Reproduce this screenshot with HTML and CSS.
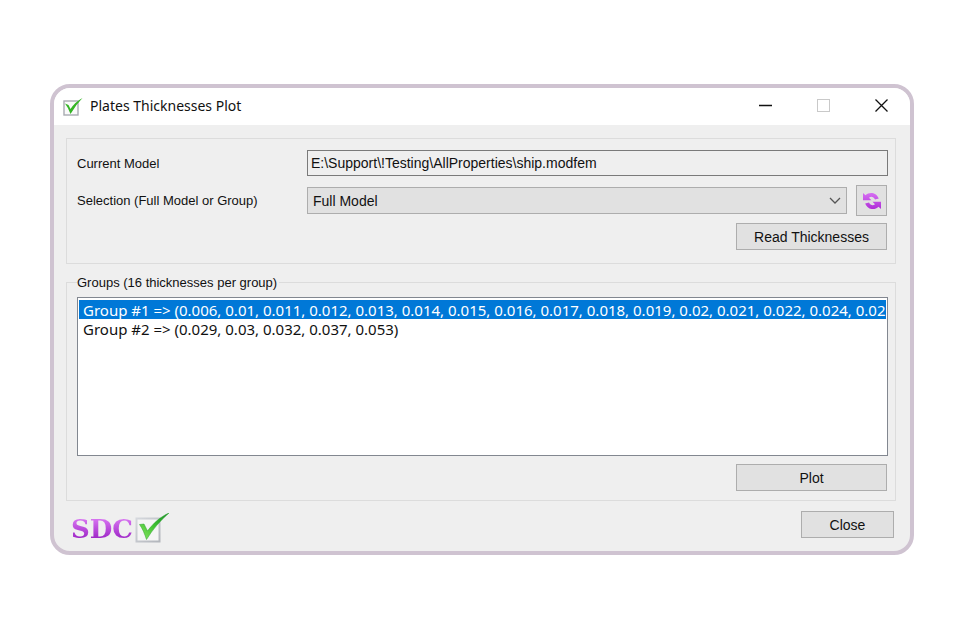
FILE: index.html
```html
<!DOCTYPE html>
<html lang="en">
<head>
    <meta charset="UTF-8">
    <meta name="viewport" content="width=device-width, initial-scale=1.0">
    <title>Plates Thicknesses Plot</title>
    <link rel="stylesheet" href="styles.css">
</head>
<body>
    <main class="window">
        <header class="title-bar">
            <svg class="title-icon" viewBox="0 0 20 18" aria-hidden="true">
                <rect x="1" y="3" width="14" height="14" fill="#fafafa" stroke="#a9abb2" stroke-width="1.4"/>
                <path d="M2 5.500L5.500 7L7.500 11Q12 4 19.500 0Q13 6.500 7.500 16Q5.500 10 2 5.500z" fill="#35b526"/>
            </svg>
            <h1>Plates Thicknesses Plot</h1>
            <div class="window-buttons">
                <button type="button" aria-label="Minimize">
                    <svg viewBox="0 0 14 14"><path d="M0 6.500H13" stroke="#111" stroke-width="1.300" fill="none"/></svg>
                </button>
                <button type="button" aria-label="Maximize" disabled>
                    <svg viewBox="0 0 14 14"><rect x="0.500" y="0.500" width="12" height="12" stroke="#c9c9c9" fill="none"/></svg>
                </button>
                <button type="button" aria-label="Close window">
                    <svg viewBox="0 0 14 14"><path d="M0.500 0.500L12.500 12.500M12.500 0.500L0.500 12.500" stroke="#111" stroke-width="1.300" fill="none"/></svg>
                </button>
            </div>
        </header>

        <div class="content">
            <section class="group model-group">
                <div class="row">
                    <label for="model">Current Model</label>
                    <input id="model" class="model-input" type="text" value="E:\Support\!Testing\AllProperties\ship.modfem" readonly>
                </div>
                <div class="row">
                    <label for="selection">Selection (Full Model or Group)</label>
                    <select id="selection" class="selection-select">
                        <option>Full Model</option>
                    </select>
                    <button type="button" class="btn refresh-btn" aria-label="Refresh">
                        <svg viewBox="0 0 18 18">
                            <defs>
                                <linearGradient id="refresh-fill" x1="0" y1="0" x2="0" y2="18" gradientUnits="userSpaceOnUse">
                                    <stop offset="0" stop-color="#d873f4"/>
                                    <stop offset="1" stop-color="#ad2bd6"/>
                                </linearGradient>
                            </defs>
                            <g fill="url(#refresh-fill)">
                                <path d="M0 1L2.500 3.200C6 -0.300 13 -0.300 15.800 6.500L12 7.500C10.500 4.500 8 4 6 5.800L8.500 8.300H0z"/>
                                <path d="M18 17L15.500 14.800C12 18.300 5 18.300 2.200 11.500L6 10.500C7.500 13.500 10 14 12 12.200L9.500 9.700H18z"/>
                            </g>
                        </svg>
                    </button>
                </div>
                <div class="actions">
                    <button type="button" class="btn wide-btn">Read Thicknesses</button>
                </div>
            </section>

            <fieldset class="group plot-group">
                <legend><label for="groups">Groups (16 thicknesses per group)</label></legend>
                <select id="groups" class="group-list" size="8">
                    <option selected>Group #1 =&gt; (0.006, 0.01, 0.011, 0.012, 0.013, 0.014, 0.015, 0.016, 0.017, 0.018, 0.019, 0.02, 0.021, 0.022, 0.024, 0.025)</option>
                    <option>Group #2 =&gt; (0.029, 0.03, 0.032, 0.037, 0.053)</option>
                </select>
                <div class="actions">
                    <button type="button" class="btn wide-btn">Plot</button>
                </div>
            </fieldset>

            <footer class="bottom-bar">
                <div class="logo">
                    <span class="logo-text">SDC</span>
                    <svg class="logo-check" viewBox="0 0 35 30" aria-hidden="true">
                        <defs>
                            <linearGradient id="box-line" x1="0" y1="0" x2="1" y2="1">
                                <stop offset="0" stop-color="#d5d8dd"/>
                                <stop offset="1" stop-color="#b3b6bc"/>
                            </linearGradient>
                            <linearGradient id="check-fill" x1="1" y1="0" x2="0" y2="1">
                                <stop offset="0" stop-color="#178a2a"/>
                                <stop offset="0.500" stop-color="#3fc32f"/>
                                <stop offset="1" stop-color="#8ee667"/>
                            </linearGradient>
                        </defs>
                        <rect x="1.500" y="5.500" width="23" height="23" fill="#f5f5f5" stroke="url(#box-line)" stroke-width="2"/>
                        <path d="M4.500 11.500L9 11L12.500 18C18.500 10 25 4 34 0C25 8 18 16 11.500 26.500C9.500 20.500 7.500 15.500 4.500 11.500z" fill="url(#check-fill)" stroke="#2aa32c" stroke-width="0.500"/>
                    </svg>
                </div>
                <button type="button" class="btn close-btn">Close</button>
            </footer>
        </div>
    </main>
</body>
</html>
```
FILE: styles.css
```css
* {
    box-sizing: border-box;
}

body {
    margin: 0;
    padding: 84px 50px;
    background-color: #fff;
    color: #111;
    font-family: "Liberation Sans", Arial, sans-serif;
    font-size: 14px;
}

button,
input,
select {
    font: inherit;
    color: inherit;
}

label {
    font-size: 13px;
}

.window {
    border: 4px solid #cfc3d1;
    border-radius: 20px;
    background-color: #efefef;
    overflow: hidden;
}

.title-bar {
    display: flex;
    align-items: center;
    height: 37px;
    padding: 0 6px 2px 9px;
    background-color: #fff;
}

.title-icon {
    width: 20px;
    height: 18px;
    margin-top: 2px;
}

h1 {
    flex: 1;
    margin: 0 0 0 7px;
    font-family: "Noto Sans", sans-serif;
    font-size: 14px;
    font-weight: normal;
    line-height: 20px;
}

.window-buttons {
    display: flex;
    gap: 14px;
}

.window-buttons button {
    display: flex;
    justify-content: center;
    width: 44px;
    padding: 8px 0;
    border: none;
    background: none;
}

.window-buttons svg {
    width: 14px;
    height: 14px;
}

.content {
    padding: 13px 14px 4px 12px;
}

.group {
    margin: 0;
    border: 1px solid #dcdcdc;
    padding: 0 7px 0 10px;
}

.model-group {
    padding-top: 11px;
    padding-bottom: 13px;
}

.row {
    display: flex;
    align-items: center;
    margin-bottom: 9px;
}

.row + .row {
    margin-bottom: 7px;
}

.row label {
    width: 230px;
}

.model-input {
    flex: 1;
    height: 26px;
    padding: 0 3px;
    border: 1px solid #7a7a7a;
    background-color: #efefef;
    outline: none;
}

.selection-select {
    flex: 1;
    height: 27px;
    margin-right: 9px;
    padding: 0 5px;
    border: 1px solid #adadad;
    border-radius: 0;
    appearance: none;
    background: #e1e1e1 url("data:image/svg+xml,%3Csvg xmlns='http://www.w3.org/2000/svg' width='12' height='8'%3E%3Cpath d='M1 1l5 5 5-5' fill='none' stroke='%23555' stroke-width='1.3'/%3E%3C/svg%3E") no-repeat right 5px center;
}

.btn {
    height: 27px;
    padding: 0;
    border: 1px solid #adadad;
    background-color: #e1e1e1;
}

.refresh-btn {
    display: flex;
    align-items: center;
    justify-content: center;
    width: 31px;
    height: 31px;
    margin-right: 1px;
}

.refresh-btn svg {
    width: 18px;
    height: 18px;
}

.actions {
    display: flex;
    justify-content: flex-end;
    padding-right: 1px;
}

.wide-btn {
    width: 151px;
}

.plot-group {
    margin-top: 9px;
    padding-bottom: 9px;
}

legend {
    padding: 0 2px 0 0;
    line-height: 18px;
}

.group-list {
    display: block;
    width: 100%;
    height: 159px;
    margin: 5px 0 8px;
    padding: 2px 1px;
    border: 1px solid #828790;
    border-radius: 0;
    background-color: #fff;
    font-family: "Noto Sans", sans-serif;
    font-size: 15px;
    overflow: hidden;
    outline: none;
}

.group-list option {
    height: 19px;
    min-height: 19px;
    padding: 0 4px;
    line-height: 19px;
}

.group-list option:checked {
    background: #0078d7 linear-gradient(#0078d7, #0078d7);
    color: #fff;
    -webkit-text-fill-color: #fff;
}

.bottom-bar {
    display: flex;
    align-items: flex-start;
    justify-content: space-between;
    padding: 10px 2px 0 5px;
}

.logo {
    display: flex;
    gap: 2px;
}

.logo-text {
    background: linear-gradient(#d977f2 20%, #9a22c4 80%);
    background-clip: text;
    color: transparent;
    font-family: "DejaVu Serif", serif;
    font-size: 26px;
    font-weight: bold;
    line-height: 36px;
}

.logo-check {
    width: 35px;
    height: 30px;
    margin-top: 2px;
}

.close-btn {
    width: 93px;
}
```
